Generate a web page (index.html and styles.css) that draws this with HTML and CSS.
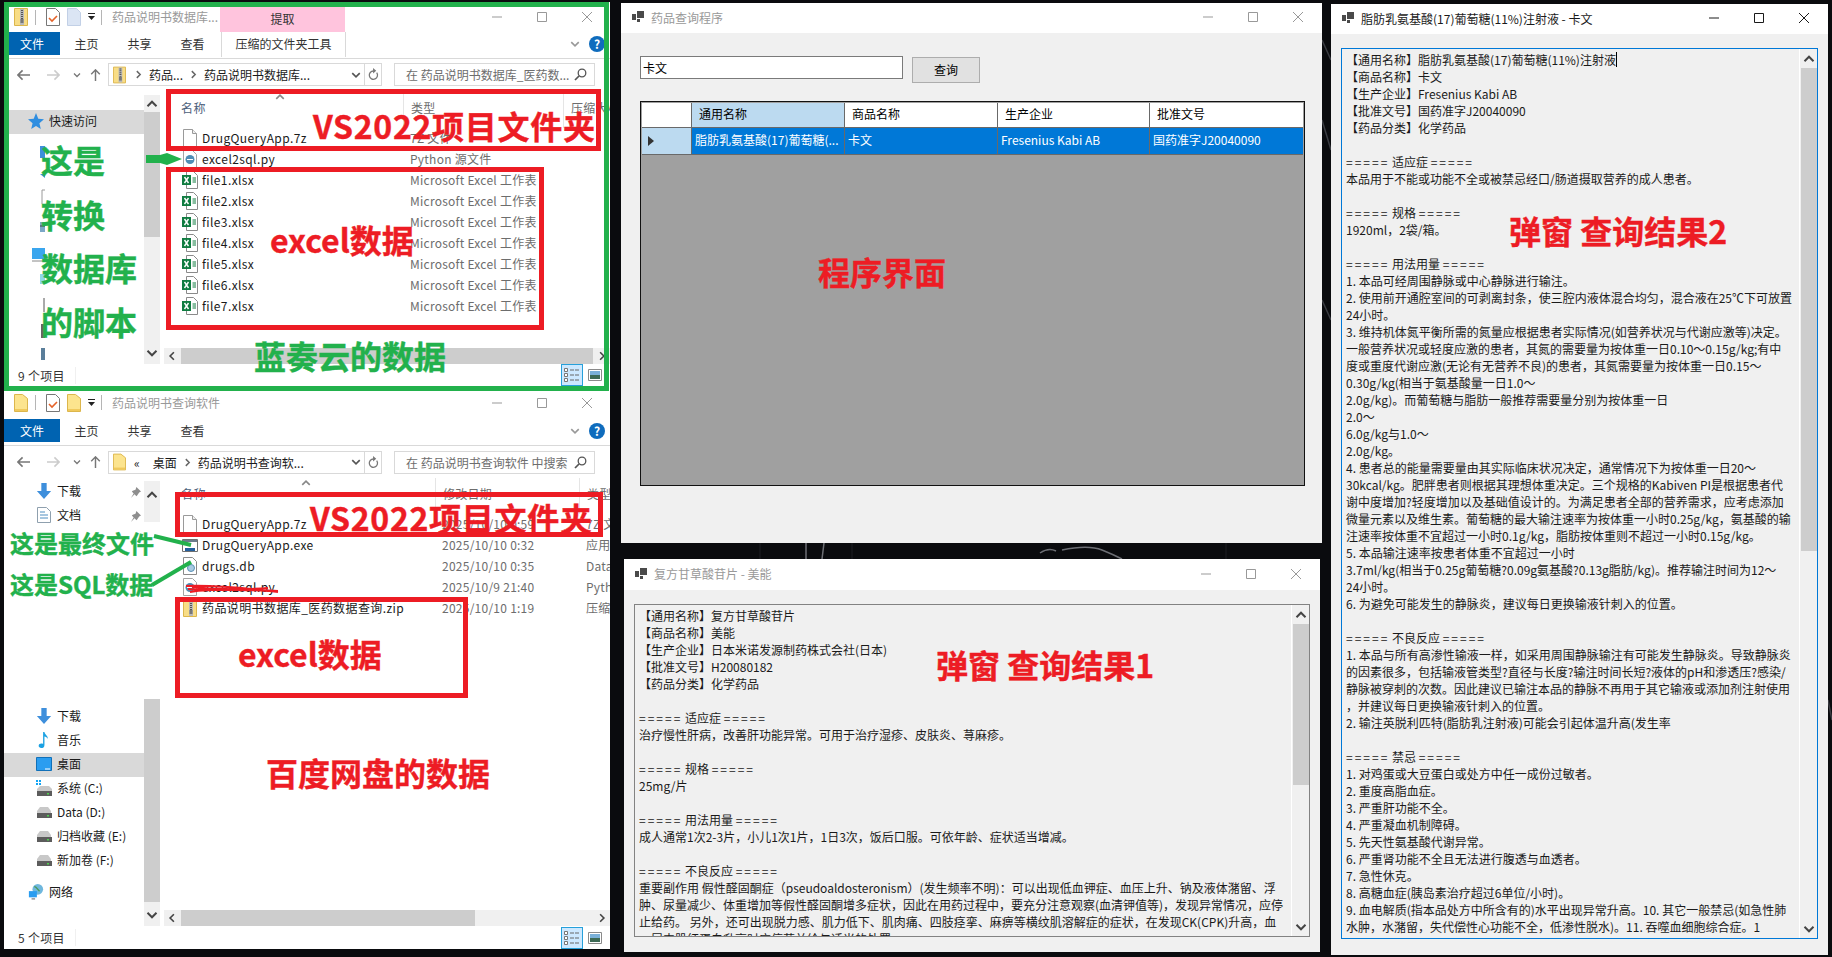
FILE: index.html
```html
<!DOCTYPE html>
<html lang="zh-CN">
<head>
<meta charset="utf-8">
<title>药品查询程序</title>
<link rel="stylesheet" href="styles.css">
</head>
<body>
<svg class="defs" aria-hidden="true">
  <symbol id="i-zip" viewBox="0 0 14 18"><path d="M.5.5h13v17H.5z" fill="#f8dd86" stroke="#dcb64c"/><path d="M6 1h4v16H6z" fill="#b9b9b9"/><path d="M7 2h2v1H7zM7 4h2v1H7zM7 6h2v1H7zM7 8h2v1H7zM7 10h2v1H7z" fill="#555"/><path d="M6.500 11h3v4h-3z" fill="#777"/></symbol>
  <symbol id="i-check" viewBox="0 0 14 18"><path d="M.5.5h9l4 4v13H.500z" fill="#fff" stroke="#777"/><path d="M3 10l3 3 5-5" fill="none" stroke="#e5632a" stroke-width="1.600"/></symbol>
  <symbol id="i-pale" viewBox="0 0 14 18"><path d="M.5.500h9l4 4v13H.500z" fill="#dbe5f4" stroke="#c2d0e6"/></symbol>
  <symbol id="i-folder" viewBox="0 0 14 18"><path d="M.5.5h8l5 4v13H.5z" fill="#fce48e" stroke="#dcb64c"/><path d="M1 15h12v2H1z" fill="#f0c95c"/></symbol>
  <symbol id="i-min" viewBox="0 0 12 12"><path d="M1 6h10" stroke="currentColor" fill="none"/></symbol>
  <symbol id="i-max" viewBox="0 0 12 12"><path d="M1.500 1.500h9v9h-9z" stroke="currentColor" fill="none"/></symbol>
  <symbol id="i-close" viewBox="0 0 12 12"><path d="M1 1l10 10M11 1L1 11" stroke="currentColor" fill="none"/></symbol>
  <symbol id="i-app" viewBox="0 0 12 12"><path d="M5 0h7v7H5zM0 3h4v6H0zM5 8h3v3H5z" fill="currentColor"/></symbol>
  <symbol id="i-blank" viewBox="0 0 14 18"><path d="M.5.500h9l4 4v13H.500z" fill="#fff" stroke="#9a9a9a"/><path d="M9.500.5v4h4" fill="#eee" stroke="#9a9a9a"/></symbol>
  <symbol id="i-py" viewBox="0 0 14 18"><path d="M.5.500h9l4 4v13H.500z" fill="#fff" stroke="#a5a5a5"/><circle cx="7" cy="9.500" r="4.500" fill="#4f8db5"/><path d="M4 9.500h6" stroke="#fff"/></symbol>
  <symbol id="i-xlsx" viewBox="0 0 16 18"><path d="M4.500.5h7l4 4v13h-11z" fill="#fff" stroke="#8a8a8a"/><path d="M0 4h9v10H0z" fill="#107c41"/><path d="M2.500 6l4 6M6.500 6l-4 6" stroke="#fff" stroke-width="1.400"/><path d="M10.500 7h3.500M10.500 9h3.500M10.500 11h3.500" stroke="#107c41"/></symbol>
  <symbol id="i-exe" viewBox="0 0 16 16"><path d="M.5 2.500h15v12H.5z" fill="#fff" stroke="#707070"/><path d="M1 3h14v2H1z" fill="#6b7c8c"/><path d="M3 11h10v3H3z" fill="#245f9d"/></symbol>
  <symbol id="i-db" viewBox="0 0 14 18"><path d="M.5.500h9l4 4v13H.500z" fill="#fff" stroke="#8a8a8a"/><circle cx="8" cy="11" r="3.500" fill="#a8cbe3" stroke="#5b90b5"/></symbol>
  <symbol id="i-star" viewBox="0 0 14 14"><path d="M7 0l2 5 5 .5-4 3.500 1.200 5L7 11.300 2.800 14 4 9 0 5.500 5 5z" fill="#2f8ee0"/></symbol>
  <symbol id="i-down" viewBox="0 0 16 18"><path d="M5 0h6v9h5l-8 9-8-9h5z" fill="#3e8fdc"/></symbol>
  <symbol id="i-doc" viewBox="0 0 14 16"><path d="M.5.500h9l4 4v11H.500z" fill="#fff" stroke="#8fa0ae"/><path d="M3 5h5M3 8h8M3 11h8" stroke="#4f8ec0"/></symbol>
  <symbol id="i-pin" viewBox="0 0 12 12"><path d="M7 0l5 5-2 1-2 3-1 1-2-2-4 4 3-5-2-2 1-1 3-1z" fill="#8e8e8e"/></symbol>
  <symbol id="i-music" viewBox="0 0 12 18"><path d="M5 0h1.500c.5 3 4 4 4 8-1-2-2.500-3-4-3v9.500C6.500 17 4.800 18 3 18S0 17 0 15.500 1.500 13 3 13c.8 0 1.500.2 2 .5z" fill="#1ba1e2"/></symbol>
  <symbol id="i-desk" viewBox="0 0 16 14"><path d="M.5.500h15v13H.5z" fill="#2a9df0" stroke="#1170b8"/><path d="M9 12h5" stroke="#fff"/></symbol>
  <symbol id="i-sys" viewBox="0 0 16 16"><path d="M0 0h2v2H0zM3 0h2v2H3zM0 3h2v2H0zM3 3h2v2H3z" fill="#12a5f4"/><path d="M1 9l3-3h9l3 3v6H1z" fill="#c8c8c8"/><path d="M1 11h15v5H1z" fill="#5c5c5c"/><path d="M11 13h2v1.500h-2z" fill="#4fd14f"/></symbol>
  <symbol id="i-drive" viewBox="0 0 16 12"><path d="M1 5l3-4h8l3 4v6H1z" fill="#c8c8c8"/><path d="M1 7h15v5H1z" fill="#5c5c5c"/><path d="M11 9h2v1.500h-2z" fill="#4fd14f"/></symbol>
  <symbol id="i-net" viewBox="0 0 16 18"><circle cx="10" cy="6" r="6" fill="#6fb7dd"/><path d="M6 3c3 0 3 3 6 5" stroke="#4a9a5b" fill="none" stroke-width="1.500"/><path d="M0 8h9v7H0z" fill="#2a9df0"/><path d="M3 16h4v1.500H3z" fill="#888"/></symbol>
  <symbol id="i-back" viewBox="0 0 14 12"><path d="M6 1L1 6l5 5M1 6h13" fill="none" stroke="currentColor" stroke-width="1.700"/></symbol>
  <symbol id="i-fwd" viewBox="0 0 14 12"><path d="M8 1l5 5-5 5M13 6H0" fill="none" stroke="currentColor" stroke-width="1.700"/></symbol>
  <symbol id="i-up" viewBox="0 0 12 14"><path d="M1 6l5-5 5 5M6 1v13" fill="none" stroke="currentColor" stroke-width="1.700"/></symbol>
  <symbol id="i-chev" viewBox="0 0 8 8"><path d="M1 2.500l3 3 3-3" fill="none" stroke="currentColor" stroke-width="1.300"/></symbol>
  <symbol id="i-right" viewBox="0 0 8 8"><path d="M2.500 1l3 3-3 3" fill="none" stroke="currentColor" stroke-width="1.300"/></symbol>
  <symbol id="i-left" viewBox="0 0 8 8"><path d="M5.500 1l-3 3 3 3" fill="none" stroke="currentColor" stroke-width="1.300"/></symbol>
  <symbol id="i-upc" viewBox="0 0 8 8"><path d="M1 5.500l3-3 3 3" fill="none" stroke="currentColor" stroke-width="1.300"/></symbol>
  <symbol id="i-refresh" viewBox="0 0 12 14"><path d="M9.500 5A4.500 4.500 0 1 1 6 3.200" fill="none" stroke="currentColor" stroke-width="1.400"/><path d="M5.500 0v6L9 3z" fill="currentColor"/></symbol>
  <symbol id="i-search" viewBox="0 0 13 13"><circle cx="8" cy="5" r="3.800" fill="none" stroke="currentColor" stroke-width="1.300"/><path d="M5 8l-4 4" stroke="currentColor" stroke-width="1.700"/></symbol>
  <symbol id="i-qat" viewBox="0 0 8 8"><path d="M0 0h7v1H0zM0 3h7L3.500 7z" fill="#222"/></symbol>
  <symbol id="i-details" viewBox="0 0 16 16"><path d="M.5 1.500h3v3h-3zM.5 6.500h3v3h-3zM.5 11.500h3v3h-3z" fill="#fff" stroke="#777"/><path d="M6 3h4M11 3h4M6 8h4M11 8h4M6 13h4M11 13h4" stroke="#666"/></symbol>
  <symbol id="i-thumbs" viewBox="0 0 14 12"><path d="M.5.500h13v11H.5z" fill="#fff" stroke="#8a8a8a"/><path d="M2 2h10v4H2z" fill="#7ab0d8"/><path d="M2 6h10v4H2z" fill="#3d6a55"/></symbol>
</svg>

<svg class="wallpaper" viewBox="0 0 1832 957" aria-hidden="true">
  <path d="M806 543v16M824 543l-2 16M1040 553c6-4 12-4 16-2M1062 550c14-3 30-4 40 0s14 6 20 9" fill="none" stroke="#6d6f75" stroke-width="1.500"/>
  <path d="M760 543v16M852 543v16M1226 543v16" fill="none" stroke="#1d1f23"/>
  <path d="M1322 40l9 20M1322 120l9 30M1322 300l9 20M1828 700l4 20" fill="none" stroke="#3a3c42" stroke-width="1.500"/>
</svg>

<section class="explorer explorer-top">
  <header class="ex-title">
    <svg class="qat"><use href="#i-zip"/></svg><i class="qat-sep"></i>
    <svg class="qat"><use href="#i-check"/></svg>
    <svg class="qat"><use href="#i-pale"/></svg>
    <svg class="qat-drop"><use href="#i-qat"/></svg><i class="qat-sep"></i>
    <span class="ex-name ex-name-short">药品说明书数据库...</span>
    <span class="ctx-tab">提取</span>
    <span class="ctrls"><svg class="ctrl"><use href="#i-min"/></svg><svg class="ctrl"><use href="#i-max"/></svg><svg class="ctrl"><use href="#i-close"/></svg></span>
  </header>
  <nav class="ribbon">
    <span class="rb-file">文件</span><span class="rb-tab">主页</span><span class="rb-tab">共享</span><span class="rb-tab">查看</span>
    <span class="rb-ctx">压缩的文件夹工具</span>
    <svg class="rb-chev"><use href="#i-chev"/></svg><span class="rb-help">?</span>
  </nav>
  <div class="addr-row">
    <svg class="nv nv-back"><use href="#i-back"/></svg><svg class="nv nv-fwd"><use href="#i-fwd"/></svg><svg class="nv-drop"><use href="#i-chev"/></svg><svg class="nv nv-up"><use href="#i-up"/></svg>
    <div class="addr">
      <svg class="addr-ico"><use href="#i-zip"/></svg><svg class="crumb"><use href="#i-right"/></svg><span>药品...</span><svg class="crumb"><use href="#i-right"/></svg><span class="addr-grow">药品说明书数据库...</span>
      <svg class="addr-drop"><use href="#i-chev"/></svg><span class="addr-ref"><svg class="ref-ico"><use href="#i-refresh"/></svg></span>
    </div>
    <div class="search"><span class="search-text">在 药品说明书数据库_医药数...</span><svg class="search-ico"><use href="#i-search"/></svg></div>
  </div>
  <div class="ex-body">
    <aside class="nav-pane">
      <div class="nav-item nav-root nav-sel nav-first"><svg class="nav-ico"><use href="#i-star"/></svg>快速访问</div>
      <svg class="nav-peek" viewBox="0 0 14 250" aria-hidden="true">
        <path d="M8 6h5v12H8z" fill="#3e8fdc"/><path d="M8 34l5 4v-4z" fill="#3e8fdc"/>
        <path d="M10 50h3M10 50v14" stroke="#9a9a9a" fill="none"/><path d="M8 82h5v10H8z" fill="#7ba7c7"/><path d="M8 86h5" stroke="#444"/>
        <path d="M0 108h13v11H0z" fill="#3aa6ee"/><path d="M0 121h13" stroke="#888"/><path d="M8 134h5v10H8z" fill="#8fd8e6"/>
        <path d="M12 158v14" stroke="#555"/><path d="M9 184h4v14H9z" fill="#666"/><path d="M9 208h4v12H9z" fill="#5a7e9a"/>
      </svg>
    </aside>
    <div class="vbar vbar-top">
      <div class="vb-end"><svg class="vb-arrow"><use href="#i-upc"/></svg></div>
      <div class="vb-thumb"></div>
      <div class="vb-rest"><svg class="vb-arrow"><use href="#i-chev"/></svg></div>
    </div>
    <div class="list list-top">
      <div class="l-head"><svg class="sort"><use href="#i-upc"/></svg><span class="lc-name">名称</span><span class="lc">类型</span><span class="lc">压缩大小</span></div>
      <div class="l-row"><span class="lc-name"><svg class="f-ico"><use href="#i-blank"/></svg>DrugQueryApp.7z</span><span class="lc">7Z 文件</span></div>
      <div class="l-row"><span class="lc-name"><svg class="f-ico"><use href="#i-py"/></svg>excel2sql.py</span><span class="lc">Python 源文件</span></div>
      <div class="l-row"><span class="lc-name"><svg class="f-ico"><use href="#i-xlsx"/></svg>file1.xlsx</span><span class="lc">Microsoft Excel 工作表</span></div>
      <div class="l-row"><span class="lc-name"><svg class="f-ico"><use href="#i-xlsx"/></svg>file2.xlsx</span><span class="lc">Microsoft Excel 工作表</span></div>
      <div class="l-row"><span class="lc-name"><svg class="f-ico"><use href="#i-xlsx"/></svg>file3.xlsx</span><span class="lc">Microsoft Excel 工作表</span></div>
      <div class="l-row"><span class="lc-name"><svg class="f-ico"><use href="#i-xlsx"/></svg>file4.xlsx</span><span class="lc">Microsoft Excel 工作表</span></div>
      <div class="l-row"><span class="lc-name"><svg class="f-ico"><use href="#i-xlsx"/></svg>file5.xlsx</span><span class="lc">Microsoft Excel 工作表</span></div>
      <div class="l-row"><span class="lc-name"><svg class="f-ico"><use href="#i-xlsx"/></svg>file6.xlsx</span><span class="lc">Microsoft Excel 工作表</span></div>
      <div class="l-row"><span class="lc-name"><svg class="f-ico"><use href="#i-xlsx"/></svg>file7.xlsx</span><span class="lc">Microsoft Excel 工作表</span></div>
      <div class="hbar hbar-top"><svg class="hb-arrow"><use href="#i-left"/></svg><div class="hb-thumb"></div><svg class="hb-arrow"><use href="#i-right"/></svg></div>
    </div>
  </div>
  <footer class="ex-status"><span class="st-count">9 个项目</span><span class="view-btn"><svg class="view-ico"><use href="#i-details"/></svg></span><svg class="view-thumb"><use href="#i-thumbs"/></svg></footer>
</section>

<section class="explorer explorer-bottom">
  <header class="ex-title">
    <svg class="qat"><use href="#i-folder"/></svg><i class="qat-sep"></i>
    <svg class="qat"><use href="#i-check"/></svg>
    <svg class="qat"><use href="#i-folder"/></svg>
    <svg class="qat-drop"><use href="#i-qat"/></svg><i class="qat-sep"></i>
    <span class="ex-name">药品说明书查询软件</span>
    <span class="ctrls"><svg class="ctrl"><use href="#i-min"/></svg><svg class="ctrl"><use href="#i-max"/></svg><svg class="ctrl"><use href="#i-close"/></svg></span>
  </header>
  <nav class="ribbon">
    <span class="rb-file">文件</span><span class="rb-tab">主页</span><span class="rb-tab">共享</span><span class="rb-tab">查看</span>
    <svg class="rb-chev"><use href="#i-chev"/></svg><span class="rb-help">?</span>
  </nav>
  <div class="addr-row">
    <svg class="nv nv-back"><use href="#i-back"/></svg><svg class="nv nv-fwd"><use href="#i-fwd"/></svg><svg class="nv-drop"><use href="#i-chev"/></svg><svg class="nv nv-up"><use href="#i-up"/></svg>
    <div class="addr">
      <svg class="addr-ico"><use href="#i-folder"/></svg><span class="addr-more">«</span><span>桌面</span><svg class="crumb"><use href="#i-right"/></svg><span class="addr-grow">药品说明书查询软...</span>
      <svg class="addr-drop"><use href="#i-chev"/></svg><span class="addr-ref"><svg class="ref-ico"><use href="#i-refresh"/></svg></span>
    </div>
    <div class="search"><span class="search-text">在 药品说明书查询软件 中搜索</span><svg class="search-ico"><use href="#i-search"/></svg></div>
  </div>
  <div class="ex-body">
    <aside class="nav-pane">
      <div class="nav-item nav-top"><svg class="nav-ico"><use href="#i-down"/></svg>下载<svg class="pin"><use href="#i-pin"/></svg></div>
      <div class="nav-item"><svg class="nav-ico"><use href="#i-doc"/></svg>文档<svg class="pin"><use href="#i-pin"/></svg></div>
      <div class="nav-item nav-gap"><svg class="nav-ico"><use href="#i-down"/></svg>下载</div>
      <div class="nav-item"><svg class="nav-ico"><use href="#i-music"/></svg>音乐</div>
      <div class="nav-item nav-sel"><svg class="nav-ico"><use href="#i-desk"/></svg>桌面</div>
      <div class="nav-item"><svg class="nav-ico"><use href="#i-sys"/></svg>系统 (C:)</div>
      <div class="nav-item"><svg class="nav-ico"><use href="#i-drive"/></svg>Data (D:)</div>
      <div class="nav-item"><svg class="nav-ico"><use href="#i-drive"/></svg>归档收藏 (E:)</div>
      <div class="nav-item"><svg class="nav-ico"><use href="#i-drive"/></svg>新加卷 (F:)</div>
      <div class="nav-item nav-root nav-net"><svg class="nav-ico"><use href="#i-net"/></svg>网络</div>
    </aside>
    <div class="vbar vbar-bottom">
      <div class="vb-head"><svg class="vb-arrow"><use href="#i-upc"/></svg></div>
      <div class="vb-thumb"></div>
      <div class="vb-rest"><svg class="vb-arrow"><use href="#i-chev"/></svg></div>
    </div>
    <div class="list list-bottom">
      <div class="l-head"><svg class="sort"><use href="#i-upc"/></svg><span class="lc-name">名称</span><span class="lc">修改日期</span><span class="lc">类型</span></div>
      <div class="l-row"><span class="lc-name"><svg class="f-ico"><use href="#i-blank"/></svg>DrugQueryApp.7z</span><span class="lc">2025/10/10 0:59</span><span class="lc">7Z 文件</span></div>
      <div class="l-row"><span class="lc-name"><svg class="f-ico"><use href="#i-exe"/></svg>DrugQueryApp.exe</span><span class="lc">2025/10/10 0:32</span><span class="lc">应用程序</span></div>
      <div class="l-row"><span class="lc-name"><svg class="f-ico"><use href="#i-db"/></svg>drugs.db</span><span class="lc">2025/10/10 0:35</span><span class="lc">Data Base File</span></div>
      <div class="l-row"><span class="lc-name"><svg class="f-ico"><use href="#i-py"/></svg>excel2sql.py</span><span class="lc">2025/10/9 21:40</span><span class="lc">Python 源文件</span></div>
      <div class="l-row"><span class="lc-name"><svg class="f-ico"><use href="#i-zip"/></svg>药品说明书数据库_医药数据查询.zip</span><span class="lc">2025/10/10 1:19</span><span class="lc">压缩文件</span></div>
      <div class="hbar hbar-bottom"><svg class="hb-arrow"><use href="#i-left"/></svg><div class="hb-thumb hb-thumb-short"></div><svg class="hb-arrow"><use href="#i-right"/></svg></div>
    </div>
  </div>
  <footer class="ex-status"><span class="st-count">5 个项目</span><span class="view-btn"><svg class="view-ico"><use href="#i-details"/></svg></span><svg class="view-thumb"><use href="#i-thumbs"/></svg></footer>
</section>

<section class="form form-main">
  <header class="f-title"><svg class="f-app"><use href="#i-app"/></svg><span class="f-name">药品查询程序</span><span class="ctrls f-ctrls"><svg class="ctrl"><use href="#i-min"/></svg><svg class="ctrl"><use href="#i-max"/></svg><svg class="ctrl"><use href="#i-close"/></svg></span></header>
  <div class="main-body">
    <div class="query-row"><input class="q-input" value="卡文" readonly><button class="q-btn" type="button">查询</button></div>
    <div class="grid">
      <div class="g-row g-headrow">
        <span class="g-corner"></span><span class="g-h g-h-active">通用名称</span><span class="g-h">商品名称</span><span class="g-h">生产企业</span><span class="g-h">批准文号</span>
      </div>
      <div class="g-row g-selrow">
        <span class="g-rowhead"><i class="g-tri"></i></span><span class="g-c">脂肪乳氨基酸(17)葡萄糖(...</span><span class="g-c">卡文</span><span class="g-c">Fresenius Kabi AB</span><span class="g-c">国药准字J20040090</span>
      </div>
    </div>
  </div>
</section>

<section class="form form-r1">
  <header class="f-title"><svg class="f-app"><use href="#i-app"/></svg><span class="f-name">复方甘草酸苷片 - 美能</span><span class="ctrls f-ctrls"><svg class="ctrl"><use href="#i-min"/></svg><svg class="ctrl"><use href="#i-max"/></svg><svg class="ctrl"><use href="#i-close"/></svg></span></header>
  <div class="memo-wrap">
    <div class="memo">
<pre class="memo-text">【通用名称】复方甘草酸苷片
【商品名称】美能
【生产企业】日本米诺发源制药株式会社(日本)
【批准文号】H20080182
【药品分类】化学药品

<span class="eq">=====</span> 适应症 <span class="eq">=====</span>
治疗慢性肝病，改善肝功能异常。可用于治疗湿疹、皮肤炎、荨麻疹。

<span class="eq">=====</span> 规格 <span class="eq">=====</span>
25mg/片

<span class="eq">=====</span> 用法用量 <span class="eq">=====</span>
成人通常1次2-3片，小儿1次1片，1日3次，饭后口服。可依年龄、症状适当增减。

<span class="eq">=====</span> 不良反应 <span class="eq">=====</span>
重要副作用 假性醛固酮症（pseudoaldosteronism）(发生频率不明)：可以出现低血钾症、血压上升、钠及液体潴留、浮
肿、尿量减少、体重增加等假性醛固酮增多症状，因此在用药过程中，要充分注意观察(血清钾值等)，发现异常情况，应停
止给药。 另外，还可出现脱力感、肌力低下、肌肉痛、四肢痉挛、麻痹等横纹肌溶解症的症状，在发现CK(CPK)升高，血
、尿中肌红蛋白升高时应停药并给与适当的处置。</pre>
      <div class="m-bar m-bar-r1"><svg class="m-arrow"><use href="#i-upc"/></svg><div class="m-thumb"></div><svg class="m-arrow m-arrow-end"><use href="#i-chev"/></svg></div>
    </div>
  </div>
</section>

<section class="form form-r2">
  <header class="f-title f-title-active"><svg class="f-app"><use href="#i-app"/></svg><span class="f-name">脂肪乳氨基酸(17)葡萄糖(11%)注射液 - 卡文</span><span class="ctrls f-ctrls"><svg class="ctrl"><use href="#i-min"/></svg><svg class="ctrl"><use href="#i-max"/></svg><svg class="ctrl"><use href="#i-close"/></svg></span></header>
  <div class="memo-wrap">
    <div class="memo memo-focus">
<pre class="memo-text">【通用名称】脂肪乳氨基酸(17)葡萄糖(11%)注射液<i class="caret"></i>
【商品名称】卡文
【生产企业】Fresenius Kabi AB
【批准文号】国药准字J20040090
【药品分类】化学药品

<span class="eq">=====</span> 适应症 <span class="eq">=====</span>
本品用于不能或功能不全或被禁忌经口/肠道摄取营养的成人患者。

<span class="eq">=====</span> 规格 <span class="eq">=====</span>
1920ml，2袋/箱。

<span class="eq">=====</span> 用法用量 <span class="eq">=====</span>
1. 本品可经周围静脉或中心静脉进行输注。
2. 使用前开通腔室间的可剥离封条，使三腔内液体混合均匀，混合液在25℃下可放置
24小时。
3. 维持机体氮平衡所需的氮量应根据患者实际情况(如营养状况与代谢应激等)决定。
一般营养状况或轻度应激的患者，其氮的需要量为按体重一日0.10～0.15g/kg;有中
度或重度代谢应激(无论有无营养不良)的患者，其氮需要量为按体重一日0.15～
0.30g/kg(相当于氨基酸量一日1.0～
2.0g/kg)。而葡萄糖与脂肪一般推荐需要量分别为按体重一日
2.0～
6.0g/kg与1.0～
2.0g/kg。
4. 患者总的能量需要量由其实际临床状况决定，通常情况下为按体重一日20～
30kcal/kg。肥胖患者则根据其理想体重决定。三个规格的Kabiven PI是根据患者代
谢中度增加?轻度增加以及基础值设计的。为满足患者全部的营养需求，应考虑添加
微量元素以及维生素。葡萄糖的最大输注速率为按体重一小时0.25g/kg，氨基酸的输
注速率按体重不宜超过一小时0.1g/kg，脂肪按体重则不超过一小时0.15g/kg。
5. 本品输注速率按患者体重不宜超过一小时
3.7ml/kg(相当于0.25g葡萄糖?0.09g氨基酸?0.13g脂肪/kg)。推荐输注时间为12～
24小时。
6. 为避免可能发生的静脉炎，建议每日更换输液针刺入的位置。

<span class="eq">=====</span> 不良反应 <span class="eq">=====</span>
1. 本品与所有高渗性输液一样，如采用周围静脉输注有可能发生静脉炎。导致静脉炎
的因素很多，包括输液管类型?直径与长度?输注时间长短?液体的pH和渗透压?感染/
静脉被穿刺的次数。因此建议已输注本品的静脉不再用于其它输液或添加剂注射使用
，并建议每日更换输液针刺入的位置。
2. 输注英脱利匹特(脂肪乳注射液)可能会引起体温升高(发生率

<span class="eq">=====</span> 禁忌 <span class="eq">=====</span>
1. 对鸡蛋或大豆蛋白或处方中任一成份过敏者。
2. 重度高脂血症。
3. 严重肝功能不全。
4. 严重凝血机制障碍。
5. 先天性氨基酸代谢异常。
6. 严重肾功能不全且无法进行腹透与血透者。
7. 急性休克。
8. 高糖血症(胰岛素治疗超过6单位/小时)。
9. 血电解质(指本品处方中所含有的)水平出现异常升高。10. 其它一般禁忌(如急性肺
水肿，水潴留，失代偿性心功能不全，低渗性脱水)。11. 吞噬血细胞综合症。1</pre>
      <div class="m-bar m-bar-r2"><svg class="m-arrow"><use href="#i-upc"/></svg><div class="m-thumb"></div><svg class="m-arrow m-arrow-end"><use href="#i-chev"/></svg></div>
    </div>
  </div>
</section>

<div class="frame frame-green"></div>
<div class="frame frame-red box-a"></div>
<div class="frame frame-red box-b"></div>
<div class="frame frame-red box-c"></div>
<div class="frame frame-red box-d"></div>

<svg class="marks" viewBox="0 0 1832 957" aria-hidden="true">
  <path d="M146 155h14l7-2 15 6-15 6-7-2h-14z" fill="#22b14c"/>
  <path d="M154 536l37 9" stroke="#22b14c" stroke-width="4" fill="none"/>
  <path d="M152 585l39-23" stroke="#22b14c" stroke-width="4" fill="none"/>
  <path d="M186 586c30-1 60 2 92 6M190 592c28-4 60-2 88-1M188 589c25 2 55 0 80 2M192 587c25 3 50 3 76 1" stroke="#ed1c24" stroke-width="2" fill="none"/>
</svg>

<span class="note note-red n-vs1">VS2022项目文件夹</span>
<span class="note note-red n-ex1">excel数据</span>
<span class="note note-green n-g1">这是</span>
<span class="note note-green n-g2">转换</span>
<span class="note note-green n-g3">数据库</span>
<span class="note note-green n-g4">的脚本</span>
<span class="note note-green n-lz">蓝奏云的数据</span>
<span class="note note-red n-vs2">VS2022项目文件夹</span>
<span class="note note-green note-small n-final">这是最终文件</span>
<span class="note note-green note-small n-sql">这是SQL数据</span>
<span class="note note-red n-ex2">excel数据</span>
<span class="note note-red n-bd">百度网盘的数据</span>
<span class="note note-red n-ui">程序界面</span>
<span class="note note-red n-r1">弹窗 查询结果1</span>
<span class="note note-red n-r2">弹窗 查询结果2</span>
</body>
</html>
```
FILE: styles.css
```css
* { box-sizing: border-box; }
html, body { margin: 0; height: 957px; overflow: hidden; }
body {
  position: relative;
  width: 1832px;
  background: #0a0b0e;
  font: 12px/17px "Noto Sans CJK SC", "Noto Sans", sans-serif;
  color: #1a1a1a;
}
.defs { position: absolute; width: 0; height: 0; }
.wallpaper, .marks { position: absolute; left: 0; top: 0; width: 1832px; height: 957px; }
.marks { pointer-events: none; }

/* windows on the desktop */
.explorer, .form { position: absolute; display: flex; flex-direction: column; overflow: hidden; }
.explorer { left: 4px; width: 606px; background: #fff; }
.explorer-top { top: 2px; height: 389px; }
.explorer-bottom { top: 391px; height: 558px; }
.form-main { left: 621px; top: 3px; width: 701px; height: 540px; background: #f0f0f0; }
.form-r1 { left: 624px; top: 559px; width: 696px; height: 393px; background: #f0f0f0; }
.form-r2 { left: 1331px; top: 4px; width: 497px; height: 951px; background: #f0f0f0; }

/* explorer title */
.ex-title { display: flex; align-items: center; padding-left: 10px; flex: none; }
.explorer-top .ex-title { height: 30px; }
.explorer-bottom .ex-title { height: 28px; padding-bottom: 5px; }
.qat { width: 14px; height: 18px; margin-right: 7px; flex: none; }
.qat-sep { width: 1px; height: 15px; background: #b5b5b5; margin: 0 10px 0 0; flex: none; }
.qat-drop { width: 8px; height: 8px; margin: 0 5px 0 0; flex: none; }
.ex-name { color: #999; white-space: nowrap; }
.ex-name-short { width: 108px; padding-bottom: 2px; }
.ctx-tab { align-self: flex-end; width: 125px; height: 25px; background: #ffc4dd; text-align: center; line-height: 23px; color: #333; }
.ctrls { display: flex; gap: 33px; margin-left: auto; padding-right: 17px; color: #999; }
.ctrl { width: 12px; height: 12px; }

/* ribbon */
.ribbon { display: flex; align-items: flex-start; height: 27px; border-bottom: 1px solid #d9d9d9; flex: none; position: relative; }
.rb-file { width: 56px; height: 23px; background: #0063b1; color: #fff; text-align: center; line-height: 23px; }
.rb-tab { width: 53px; height: 23px; line-height: 24px; text-align: center; color: #333; }
.rb-ctx { margin-left: 2px; width: 125px; height: 25px; line-height: 24px; text-align: center; border-left: 1px solid #d9d9d9; border-right: 1px solid #d9d9d9; color: #333; }
.rb-chev { width: 10px; height: 10px; margin: 7px 0 0 auto; color: #999; }
.rb-help { width: 16px; height: 16px; margin: 4px 5px 0 9px; border-radius: 50%; background: #0f6cbd; color: #fff; font-weight: 700; text-align: center; line-height: 16px; }

/* address row */
.addr-row { display: flex; align-items: center; flex: none; padding-left: 13px; color: #777; }
.explorer-top .addr-row { height: 31px; }
.explorer-bottom .addr-row { height: 32px; }
.nv { width: 13px; height: 12px; flex: none; }
.nv-fwd { margin-left: 17px; color: #ccc; }
.nv-drop { width: 8px; height: 8px; margin-left: 13px; flex: none; }
.nv-up { margin-left: 8px; }
.addr { display: flex; align-items: center; width: 274px; height: 23px; margin-left: 6px; border: 1px solid #d9d9d9; color: #1a1a1a; padding-left: 4px; }
.addr-ico { width: 13px; height: 18px; flex: none; }
.crumb { width: 9px; height: 9px; margin: 0 6px; color: #666; flex: none; }
.addr-ico + .crumb { margin-left: 8px; }
.addr-more { margin: 0 13px 0 8px; }
.addr-grow { flex: 1; white-space: nowrap; }
.addr-drop { width: 10px; height: 10px; color: #555; flex: none; margin-right: 3px; }
.addr-ref { display: flex; align-items: center; justify-content: center; width: 17px; height: 21px; border-left: 1px solid #d9d9d9; color: #777; flex: none; }
.ref-ico { width: 11px; height: 13px; }
.search { display: flex; align-items: center; justify-content: space-between; width: 201px; height: 23px; margin-left: 12px; border: 1px solid #d9d9d9; padding: 0 7px 0 11px; color: #6d6d6d; }
.search-text { white-space: nowrap; }
.search-ico { width: 13px; height: 13px; color: #555; }

/* explorer body */
.ex-body { flex: 1; display: flex; min-height: 0; }
.nav-pane { width: 140px; flex: none; display: flex; flex-direction: column; }
.nav-item { display: flex; align-items: center; height: 24px; padding: 0 0 3px 32px; white-space: nowrap; flex: none; position: relative; }
.nav-ico { width: 16px; height: 16px; margin-right: 5px; flex: none; }
.nav-root { padding-left: 24px; }
.nav-sel { background: #d9d9d9; }
.nav-first { margin-top: 20px; }
.nav-top { margin-top: 2px; }
.nav-gap { margin-top: 177px; }
.nav-net { margin-top: 8px; }
.pin { position: absolute; left: 126px; top: 7px; width: 11px; height: 11px; }
.nav-peek { width: 14px; height: 250px; margin: 6px 0 0 28px; flex: none; }

.vbar { width: 16px; flex: none; display: flex; flex-direction: column; }
.vb-end, .vb-head { background: #f0f0f0; display: flex; justify-content: center; align-items: center; flex: none; }
.vb-end { height: 17px; margin-top: 5px; }
.vb-head { height: 41px; margin-top: 3px; align-items: flex-start; padding-top: 8px; }
.vb-thumb { background: #cdcdcd; flex: none; }
.vbar-top .vb-thumb { height: 125px; }
.vbar-bottom .vb-thumb { height: 203px; margin-top: 177px; }
.vb-rest { flex: 1; background: #f0f0f0; display: flex; justify-content: center; align-items: flex-end; padding-bottom: 5px; }
.vb-arrow { width: 12px; height: 12px; color: #444; }

.list { flex: 1; margin-left: 2px; position: relative; display: flex; flex-direction: column; min-width: 0; overflow: hidden; }
.l-head, .l-row { display: grid; flex: none; white-space: nowrap; }
.list-top .l-head, .list-top .l-row { grid-template-columns: 241px 160px 1fr; }
.list-bottom .l-head, .list-bottom .l-row { grid-template-columns: 273px 144px 1fr; }
.l-head { position: relative; color: #4c607a; }
.list-top .l-head { height: 34px; margin-top: 4px; }
.list-bottom .l-head { height: 36px; }
.l-head span { padding-top: 5px; border-left: 1px solid #e5e5e5; padding-left: 7px; }
.l-head .lc-name { border-left: 0; padding-left: 19px; display: block; }
.list-bottom .l-head span { padding-top: 7px; }
.sort { position: absolute; left: 113px; top: -2px; width: 10px; height: 10px; color: #888; }
.list-bottom .sort { left: 139px; top: 0; }
.l-row { height: 21px; line-height: 19px; padding-bottom: 2px; }
.lc-name { padding-left: 20px; display: flex; align-items: center; letter-spacing: .4px; overflow: hidden; }
.lc { padding-left: 7px; color: #6d6d6d; letter-spacing: .25px; overflow: hidden; }
.f-ico { width: 16px; height: 18px; margin-right: 4px; flex: none; }

.hbar { position: absolute; left: 2px; right: 0; bottom: 0; height: 16px; background: #f0f0f0; display: flex; align-items: center; color: #444; }
.hb-arrow { width: 10px; height: 10px; margin: 0 3px; flex: none; }
.hb-thumb { flex: 1; height: 16px; background: #cdcdcd; margin-left: 1px; margin-right: 1px; }
.hb-thumb-short { flex: none; width: 294px; margin-right: auto; }

.ex-status { display: flex; align-items: center; flex: none; height: 23px; padding-left: 14px; color: #333; }
.explorer-top .ex-status { height: 27px; padding-bottom: 5px; }
.st-count { letter-spacing: .3px; padding-right: 10px; border-right: 1px solid #f0f0f0; }
.view-btn { margin-left: auto; width: 22px; height: 22px; background: #cce8ff; border: 1px solid #26a0da; display: flex; align-items: center; justify-content: center; }
.view-ico { width: 16px; height: 16px; }
.view-thumb { width: 14px; height: 12px; margin: 0 8px 0 5px; }

/* winforms */
.f-title { display: flex; align-items: center; height: 30px; padding: 0 0 2px 11px; background: #fff; flex: none; color: #999; }
.form-r1 .f-title { height: 31px; }
.f-app { width: 12px; height: 12px; margin-right: 7px; color: #4a4a4a; flex: none; }
.f-name { white-space: nowrap; }
.f-ctrls { gap: 33px; padding-right: 18px; }
.f-title-active, .f-title-active .f-ctrls, .f-title-active .f-name { color: #1a1a1a; }

.main-body { flex: 1; padding: 23px 17px 57px 19px; display: flex; flex-direction: column; }
.query-row { display: flex; align-items: flex-start; flex: none; height: 27px; gap: 9px; }
.q-input { width: 263px; height: 23px; border: 1px solid #7a7a7a; background: #fff; padding: 0 2px; font: inherit; color: #000; }
.q-btn { width: 68px; height: 26px; margin: 1px 0 0; padding: 0 0 2px; background: #e1e1e1; border: 1px solid #adadad; font: inherit; color: #000; }
.grid { flex: 1; margin-top: 18px; background: #a0a0a0; border: 1px solid #111; padding: 1px; }
.g-row { display: grid; grid-template-columns: 49px 153px 153px 152px 1fr; }
.g-headrow { height: 25px; background: #fff; border-bottom: 1px solid #696969; }
.g-h { padding-left: 7px; line-height: 22px; border-left: 1px solid #696969; color: #000; }
.g-h-active { background: #bcdaf0; }
.g-selrow { height: 27px; border-bottom: 1px solid #696969; background: #0078d7; color: #fff; }
.g-rowhead { background: #bcdaf0; display: flex; align-items: center; padding-left: 6px; }
.g-tri { width: 0; height: 0; border-left: 6px solid #333; border-top: 5px solid transparent; border-bottom: 5px solid transparent; }
.g-c { padding-left: 3px; line-height: 24px; border-left: 1px solid #696969; white-space: nowrap; overflow: hidden; }

.memo-wrap { flex: 1; padding: 14px 10px 0; min-height: 0; }
.memo { display: flex; border: 1px solid #828282; min-height: 0; }
.form-r1 .memo { height: 333px; }
.form-r2 .memo { height: 891px; }
.memo-focus { border-color: #0078d7; }
.memo-text { flex: 1; margin: 0; padding: 2px 0 0 4px; font: inherit; line-height: 17px; color: #1a1a1a; white-space: pre; overflow: hidden; min-width: 0; }
.eq { letter-spacing: 2px; }
.caret { display: inline-block; width: 1px; height: 15px; background: #000; vertical-align: -2px; }
.m-bar { width: 18px; flex: none; border-left: 1px solid #fff; display: flex; flex-direction: column; align-items: center; }
.m-arrow { width: 12px; height: 12px; margin: 4px 0 3px; color: #444; flex: none; }
.m-arrow-end { margin-top: auto; margin-bottom: 3px; }
.m-thumb { width: 16px; background: #cdcdcd; flex: none; }
.m-bar-r1 .m-thumb { height: 161px; }
.m-bar-r2 .m-thumb { height: 483px; }

/* annotations drawn on top of the screenshot */
.frame { position: absolute; border-style: solid; pointer-events: none; }
.frame-green { left: 4px; top: 2px; width: 605px; height: 389px; border: 5px solid #22b14c; }
.frame-red { border-width: 5px; border-color: #ed1c24; }
.box-a { left: 166px; top: 89px; width: 435px; height: 62px; }
.box-b { left: 166px; top: 167px; width: 378px; height: 163px; }
.box-c { left: 175px; top: 492px; width: 428px; height: 45px; }
.box-d { left: 175px; top: 597px; width: 293px; height: 101px; }

.note { position: absolute; font-size: 32px; font-weight: 700; line-height: 32px; white-space: nowrap; -webkit-text-stroke: .4px currentColor; }
.note-small { font-size: 24px; line-height: 24px; }
.note-red { color: #ed1c24; }
.note-green { color: #22b14c; }
.n-vs1, .n-vs2 { letter-spacing: .7px; }
.n-vs1 { left: 313px; top: 109px; }
.n-ex1 { left: 270px; top: 223px; }
.n-g1 { left: 41px; top: 143px; }
.n-g2 { left: 41px; top: 198px; }
.n-g3 { left: 41px; top: 251px; }
.n-g4 { left: 41px; top: 305px; }
.n-lz { left: 254px; top: 339px; }
.n-vs2 { left: 310px; top: 501px; }
.n-final { left: 10px; top: 531px; }
.n-sql { left: 10px; top: 572px; }
.n-ex2 { left: 238px; top: 637px; }
.n-bd { left: 266px; top: 756px; }
.n-ui { left: 818px; top: 255px; }
.n-r1 { left: 936px; top: 648px; }
.n-r2 { left: 1509px; top: 214px; }
```
